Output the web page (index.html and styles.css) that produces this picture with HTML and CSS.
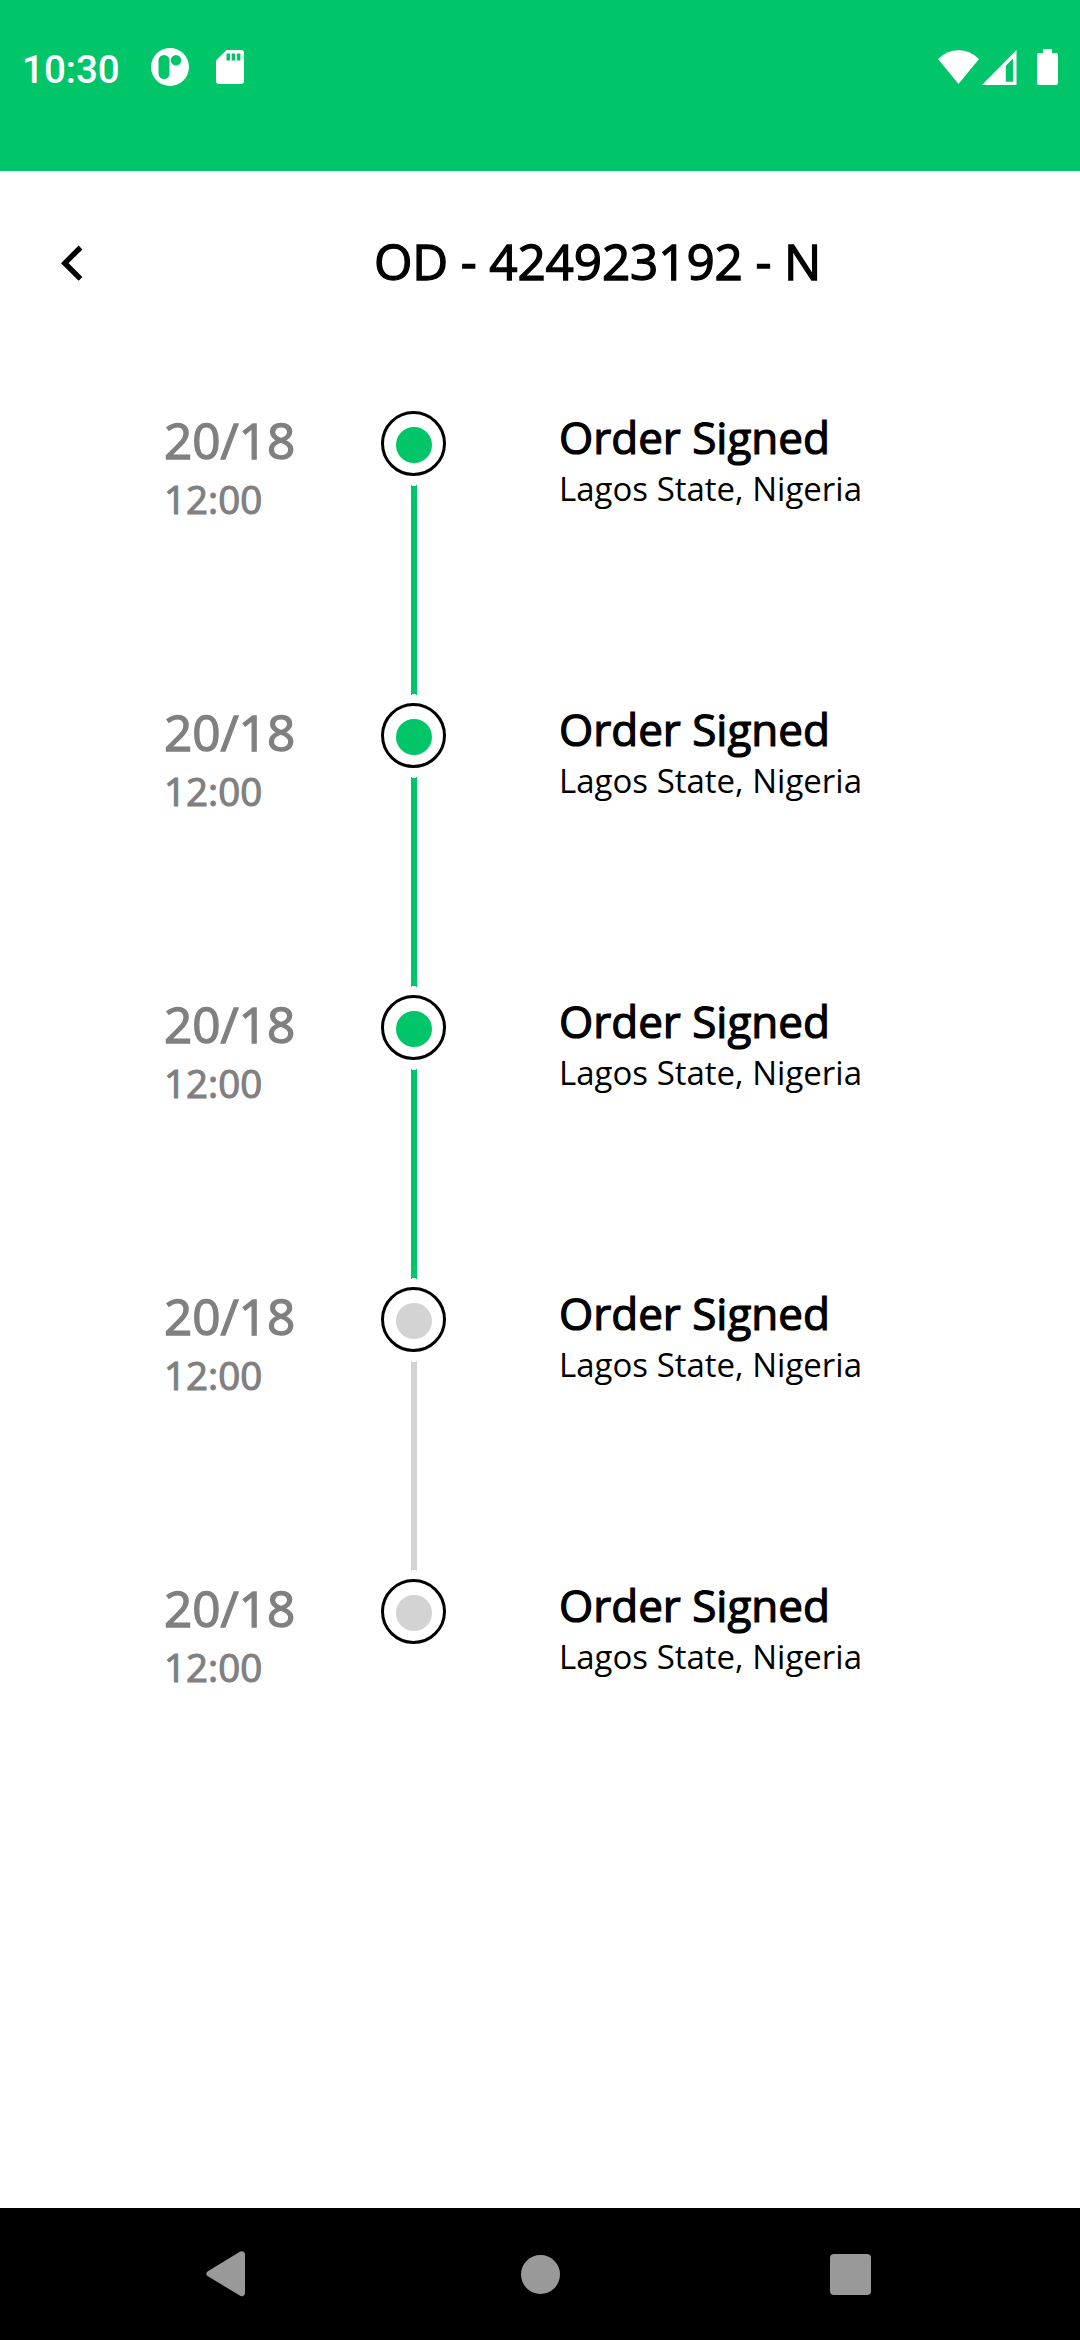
FILE: index.html
```html
<!DOCTYPE html>
<html lang="en">
<head>
<meta charset="utf-8">
<title>Order tracking</title>
<link rel="stylesheet" href="styles.css">
</head>
<body>
<div class="screen">
  <header class="status">
    <span class="clock">10:30</span>
    <svg class="app-icon" width="38" height="38" viewBox="0 0 38 38"><path fill="#fff" fill-rule="evenodd" d="M19 0a19 19 0 1 1 0 38a19 19 0 0 1 0-38zM13 7a5.500 5.500 0 0 0-5.500 5.500v13a5.500 5.500 0 0 0 11 0v-13a5.500 5.500 0 0 0-5.500-5.500zM25 7a5.200 5.200 0 1 0 0 10.400a5.200 5.200 0 0 0 0-10.400z"/></svg>
    <svg class="sd-icon" width="28" height="34" viewBox="0 0 28 34"><path fill="#fff" fill-rule="evenodd" d="M10.500 0H25a3 3 0 0 1 3 3v28a3 3 0 0 1-3 3H3a3 3 0 0 1-3-3V10.500zM10.500 3.500v7h3.500v-7zM15.700 3.500v7h3.500v-7zM20.900 3.500v7h3.500v-7z"/></svg>
    <svg class="wifi" width="41" height="34" viewBox="0 0 41 34"><path fill="#fff" d="M0 9Q8.500.2 20.500.2T41 9L20.500 34z"/></svg>
    <svg class="signal" width="35" height="35" viewBox="0 0 35 35"><path fill="#fff" fill-rule="evenodd" d="M34.500 0v35H0zM31 8.500l-7.200 7.200v16H31z"/></svg>
    <svg class="battery" width="21" height="36" viewBox="0 0 21 36"><path fill="#fff" d="M6 0h9v4h4a2 2 0 0 1 2 2v28a2 2 0 0 1-2 2H2a2 2 0 0 1-2-2V6a2 2 0 0 1 2-2h4z"/></svg>
  </header>
  <div class="appbar">
    <svg class="back" width="22" height="37" viewBox="0 0 22 37"><path fill="none" stroke="#000" stroke-width="5.400" d="M19.500 2.500L3.800 18.200L19.500 33.900"/></svg>
    <h1 class="title">OD - 424923192 - N</h1>
  </div>
  <main class="timeline">
    <section class="step done">
      <div class="when"><div class="date">20/18</div><div class="time">12:00</div></div>
      <div class="track"><div class="ring"><span class="dot"></span></div><div class="line"></div></div>
      <div class="info"><div class="name">Order Signed</div><div class="place">Lagos State, Nigeria</div></div>
    </section>
    <section class="step done">
      <div class="when"><div class="date">20/18</div><div class="time">12:00</div></div>
      <div class="track"><div class="ring"><span class="dot"></span></div><div class="line"></div></div>
      <div class="info"><div class="name">Order Signed</div><div class="place">Lagos State, Nigeria</div></div>
    </section>
    <section class="step done">
      <div class="when"><div class="date">20/18</div><div class="time">12:00</div></div>
      <div class="track"><div class="ring"><span class="dot"></span></div><div class="line"></div></div>
      <div class="info"><div class="name">Order Signed</div><div class="place">Lagos State, Nigeria</div></div>
    </section>
    <section class="step">
      <div class="when"><div class="date">20/18</div><div class="time">12:00</div></div>
      <div class="track"><div class="ring"><span class="dot"></span></div><div class="line"></div></div>
      <div class="info"><div class="name">Order Signed</div><div class="place">Lagos State, Nigeria</div></div>
    </section>
    <section class="step">
      <div class="when"><div class="date">20/18</div><div class="time">12:00</div></div>
      <div class="track"><div class="ring"><span class="dot"></span></div></div>
      <div class="info"><div class="name">Order Signed</div><div class="place">Lagos State, Nigeria</div></div>
    </section>
  </main>
  <nav class="navbar">
    <svg width="39" height="46" viewBox="0 0 39 46"><path fill="#999" d="M33.800.8Q35.500-.2 37 .4Q39 1 39 3.500V42Q39 44.500 37 45.100Q35.500 45.600 33.800 44.600L1.500 25Q-1 22.700 1.500 20.400z"/></svg>
    <span class="home"></span>
    <span class="recent"></span>
  </nav>
</div>
</body>
</html>
```
FILE: styles.css
```css
body {
  margin: 0;
  background: #fff;
  color: #000;
  font-family: "Open Sans", sans-serif;
}
svg { display: block; flex: none; }
.screen {
  width: 1080px;
  height: 2340px;
  display: flex;
  flex-direction: column;
}
.status {
  height: 134px;
  padding: 0 22px 37px 22px;
  display: flex;
  align-items: center;
  background: #00c569;
}
.clock {
  width: 129px;
  padding-top: 5px;
  color: #fff;
  font: 500 38.500px/46px Roboto, sans-serif;
}
.app-icon { margin-right: 27px; }
.sd-icon { margin-right: auto; }
.wifi { margin-right: 3px; }
.signal { margin-right: 20px; }
.appbar {
  height: 60px;
  padding: 60px 0 119px 61px;
  display: flex;
  align-items: center;
}
.back {
  margin-top: 4px;
  margin-right: 291px;
}
.title {
  margin: 0;
  font-size: 49.500px;
  font-weight: 400;
  line-height: 60px;
  letter-spacing: -0.150px;
  white-space: nowrap;
  -webkit-text-stroke: 1.300px #000;
}
.timeline {
  flex: 1;
  padding-left: 164px;
}
.step {
  height: 292px;
  display: grid;
  grid-template-columns: 217px 65px 1fr;
  --accent: #d3d3d3;
}
.done { --accent: #00c569; }
.when { color: #808080; }
.date {
  font-size: 49.500px;
  line-height: 60px;
  -webkit-text-stroke: 1.300px #808080;
}
.time {
  margin-top: 4px;
  font-size: 38.500px;
  line-height: 50px;
  -webkit-text-stroke: 1.100px #808080;
}
.track {
  display: flex;
  flex-direction: column;
  align-items: center;
}
.ring {
  box-sizing: border-box;
  width: 65px;
  height: 65px;
  margin: 1px 0 9px;
  padding: 2px 0 0 1px;
  border: 3px solid #000;
  border-radius: 50%;
  display: flex;
  align-items: center;
  justify-content: center;
}
.dot {
  width: 36px;
  height: 36px;
  border-radius: 50%;
  background: var(--accent);
}
.line {
  width: 6px;
  height: 210px;
  margin-left: 1px;
  background:
    radial-gradient(ellipse 2.500px 1.500px at 50% 0, #fff 80%, transparent),
    radial-gradient(ellipse 2.500px 1.500px at 50% 100%, #fff 80%, transparent),
    var(--accent);
}
.info { padding-left: 113px; }
.name {
  font-size: 44px;
  line-height: 54px;
  -webkit-text-stroke: 1.200px #000;
}
.place {
  margin-top: 3px;
  font-size: 33px;
  line-height: 44px;
}
.navbar {
  height: 132px;
  padding: 0 209px 0 206px;
  display: flex;
  align-items: center;
  background: #000;
}
.home {
  width: 39px;
  height: 39px;
  margin: 0 auto 0 276px;
  border-radius: 50%;
  background: #999;
}
.recent {
  width: 41px;
  height: 41px;
  border-radius: 4px;
  background: #999;
}
```
